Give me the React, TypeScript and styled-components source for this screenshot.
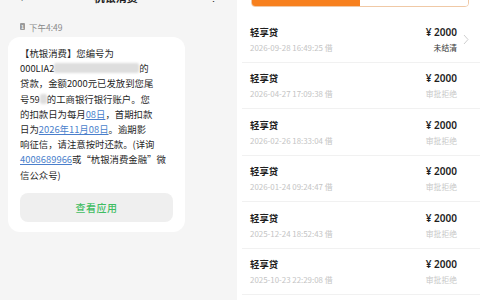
import React from 'react';
import styled, { createGlobalStyle } from 'styled-components';

const GlobalStyle = createGlobalStyle`
  html, body {
    margin: 0;
    padding: 0;
    overflow: hidden;
    background: #ffffff;
  }
  body {
    font-family: "Noto Sans CJK SC", "Noto Sans", sans-serif;
  }
`;

const Page = styled.div`
  display: flex;
  width: 480px;
  height: 300px;
  overflow: hidden;
`;

/* ---------- left: sms ---------- */

const SmsPane = styled.div`
  width: 237px;
  background: #f5f5f5;
  display: flex;
  flex-direction: column;
`;

const SmsHeader = styled.div`
  height: 20px;
  margin-top: -13.5px;
  display: flex;
  align-items: center;
  justify-content: space-between;
  padding: 0 18px 0 20px;
  color: #222;
`;

const HeaderTitle = styled.div`
  font-size: 11px;
  font-weight: 700;
  line-height: 20px;
`;

const HeaderIcon = styled.div`
  font-size: 11px;
  line-height: 20px;
  color: #333;
`;

const StampRow = styled.div`
  display: flex;
  align-items: center;
  gap: 4px;
  margin: 14px 0 0 20px;
  height: 12px;
  font-size: 8.5px;
  color: #8a8a8a;
`;

const SimBadge = styled.span`
  width: 5px;
  height: 7px;
  border-radius: 1px;
  background: #9a9a9a;
  color: #f5f5f5;
  font-size: 5px;
  line-height: 7px;
  text-align: center;
  font-weight: 700;
`;

const Bubble = styled.div`
  margin: 4px 0 0 8px;
  width: 177px;
  box-sizing: border-box;
  background: #ffffff;
  border-radius: 12px;
  padding: 9.5px 12px 10px;
`;

const SmsText = styled.div`
  font-size: 9.4px;
  line-height: 15.2px;
  color: #1f1f1f;
  white-space: nowrap;
`;

const Link = styled.span`
  color: #4a7fcc;
  text-decoration: underline;
  text-underline-offset: 1px;
`;

const Masked = styled.span<{ $w: number }>`
  display: inline-block;
  width: ${p => p.$w}px;
  height: 10px;
  vertical-align: -1px;
  background: #dedede;
  filter: blur(1px);
  border-radius: 2px;
`;

const OpenButton = styled.div`
  margin-top: 10.5px;
  height: 29px;
  border-radius: 8px;
  background: #efefef;
  display: flex;
  align-items: center;
  justify-content: center;
  color: #3fbd63;
  font-size: 10px;
  font-weight: 500;
  letter-spacing: 0.5px;
`;

/* ---------- right: records ---------- */

const RecordPane = styled.div`
  flex: 1;
  background: #ffffff;
  display: flex;
  flex-direction: column;
`;

const Tabs = styled.div`
  height: 22px;
  margin: -17px 11px 0 14px;
  display: flex;
  border: 1px solid #f0c9a6;
  border-radius: 4px;
  overflow: hidden;
`;

const Tab = styled.div<{ $active?: boolean }>`
  flex: 1;
  display: flex;
  align-items: center;
  justify-content: center;
  font-size: 9px;
  background: ${p => (p.$active ? '#f7801e' : '#ffffff')};
  color: ${p => (p.$active ? '#ffffff' : '#f7801e')};
`;

const List = styled.div`
  margin: 9px 0 0 5px;
`;

const Row = styled.div`
  display: flex;
  align-items: center;
  padding: 8.5px 0 8px 8px;
  border-bottom: 1px solid #f1f1f1;
`;

const RowBody = styled.div`
  flex: 1;
  display: grid;
  grid-template-columns: 1fr auto;
  row-gap: 2px;
`;

const Name = styled.div`
  font-size: 9.4px;
  line-height: 14px;
  font-weight: 600;
  color: #1e1e1e;
`;

const Amount = styled.div`
  font-size: 10px;
  line-height: 14px;
  font-weight: 600;
  color: #1e1e1e;
  text-align: right;
  font-family: "Noto Sans", "Noto Sans CJK SC", sans-serif;
`;

const DateText = styled.div`
  font-size: 7.9px;
  line-height: 13px;
  color: #c4c4c4;
`;

const Status = styled.div<{ $open?: boolean }>`
  font-size: 7.8px;
  line-height: 13px;
  text-align: right;
  color: ${p => (p.$open ? '#333333' : '#c8c8c8')};
`;

const ChevronSlot = styled.div`
  width: 23px;
  display: flex;
  padding-left: 6px;
  box-sizing: border-box;
`;

const records = [
  { date: '2026-09-28 16:49:25', status: '未结清', open: true },
  { date: '2026-04-27 17:09:38', status: '审批拒绝' },
  { date: '2026-02-26 18:33:04', status: '审批拒绝' },
  { date: '2026-01-24 09:24:47', status: '审批拒绝' },
  { date: '2025-12-24 18:52:43', status: '审批拒绝' },
  { date: '2025-10-23 22:29:08', status: '审批拒绝' },
];

const Chevron = () => (
  <svg width="6" height="11" viewBox="0 0 6 11">
    <path d="M1 1 L5 5.5 L1 10" fill="none" stroke="#cfcfcf" strokeWidth="1" />
  </svg>
);

const App: React.FC = () => {
  return (
    <>
      <GlobalStyle />
      <Page>
        <SmsPane>
          <SmsHeader>
            <HeaderIcon>‹</HeaderIcon>
            <HeaderTitle>杭银消费</HeaderTitle>
            <HeaderIcon>⋮</HeaderIcon>
          </SmsHeader>
          <StampRow>
            <SimBadge>1</SimBadge>
            <span>下午4:49</span>
          </StampRow>
          <Bubble>
            <SmsText>
              【杭银消费】您编号为
              <br />
              000LIA2<Masked $w={85} />的
              <br />
              贷款，金额2000元已发放到您尾
              <br />
              号59<Masked $w={7} />的工商银行银行账户。您
              <br />
              的扣款日为每月<Link>08日</Link>，首期扣款
              <br />
              日为<Link>2026年11月08日</Link>。逾期影
              <br />
              响征信，请注意按时还款。(详询
              <br />
              <Link>4008689966</Link>或“杭银消费金融”微
              <br />
              信公众号)
            </SmsText>
            <OpenButton>查看应用</OpenButton>
          </Bubble>
        </SmsPane>

        <RecordPane>
          <Tabs>
            <Tab $active>借款记录</Tab>
            <Tab>还款记录</Tab>
          </Tabs>
          <List>
            {records.map((r, i) => (
              <Row key={i}>
                <RowBody>
                  <Name>轻享贷</Name>
                  <Amount>¥ 2000</Amount>
                  <DateText>{r.date} 借</DateText>
                  <Status $open={r.open}>{r.status}</Status>
                </RowBody>
                <ChevronSlot>{r.open && <Chevron />}</ChevronSlot>
              </Row>
            ))}
          </List>
        </RecordPane>
      </Page>
    </>
  );
};

export default App;
